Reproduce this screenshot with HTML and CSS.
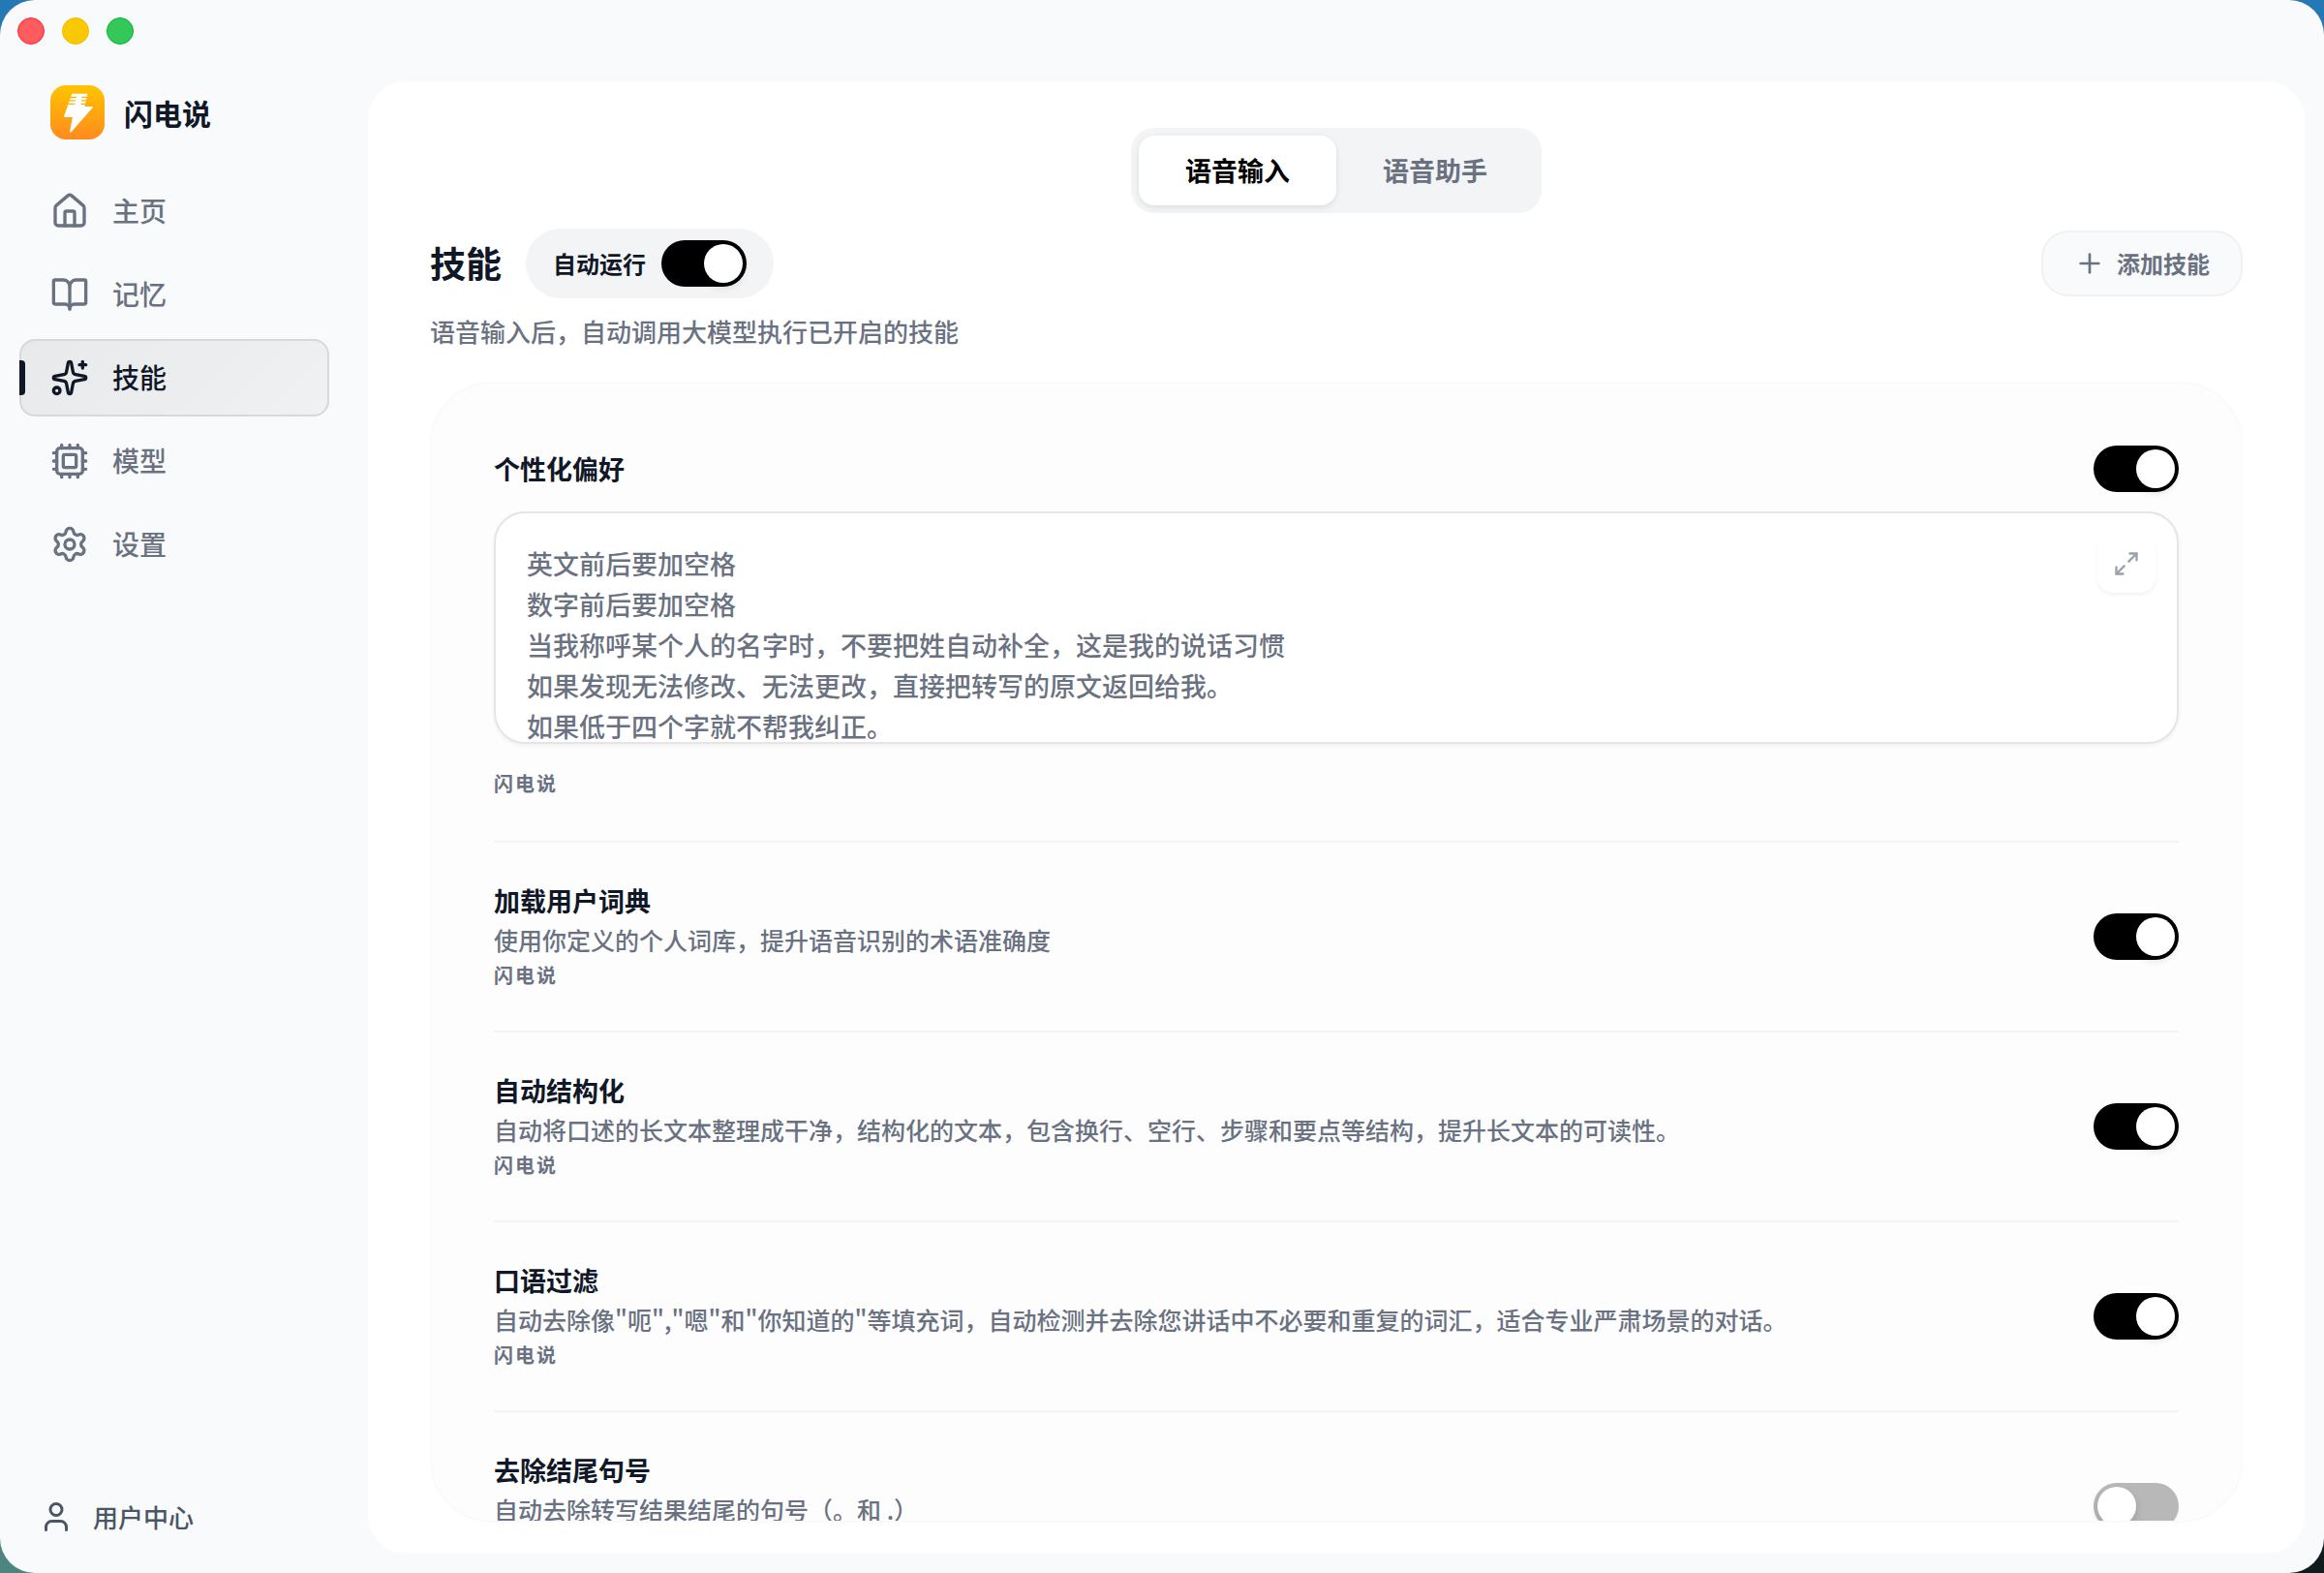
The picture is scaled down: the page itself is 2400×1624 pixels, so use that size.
FILE: index.html
```html
<!DOCTYPE html>
<html lang="zh-CN">
<head>
<meta charset="utf-8">
<meta name="viewport" content="width=device-width, initial-scale=1">
<title>闪电说</title>
<link rel="stylesheet" href="styles.css">
</head>
<body>
<div class="window">
  <aside class="sidebar">
    <div class="traffic">
      <button type="button" class="light light-close" aria-label="关闭"></button>
      <button type="button" class="light light-min" aria-label="最小化"></button>
      <button type="button" class="light light-zoom" aria-label="缩放"></button>
    </div>
    <div class="brand">
      <svg class="logo" viewBox="0 0 56 56" aria-hidden="true">
        <defs>
          <linearGradient id="logo-fill" x1="0" y1="0" x2="0" y2="1">
            <stop offset="0" stop-color="#ffc400"/>
            <stop offset="1" stop-color="#ff8a1f"/>
          </linearGradient>
        </defs>
        <rect width="56" height="56" rx="16" fill="url(#logo-fill)"/>
        <path d="M22.800 9.500 H37.500 L34.500 22.700 H43 L20.800 48 L23.800 32.300 H14.800 Z" fill="#fff" stroke="#fff" stroke-width="1.500" stroke-linejoin="round"/>
        <path d="M20 12.400 H27 M32.500 12.400 H38 M18 15.900 H26 M32 15.900 H37 M17 19.400 H25.500 M31.500 19.400 H36.500" fill="none" stroke="#ffb507" stroke-width="1.300"/>
      </svg>
      <span class="brand-name">闪电说</span>
    </div>
    <nav class="nav">
      <a class="nav-item" href="#home">
        <svg class="icon" viewBox="0 0 24 24" aria-hidden="true"><path d="M15 21v-8a1 1 0 0 0-1-1h-4a1 1 0 0 0-1 1v8"/><path d="M3 10a2 2 0 0 1 .709-1.528l7-5.999a2 2 0 0 1 2.582 0l7 5.999A2 2 0 0 1 21 10v9a2 2 0 0 1-2 2H5a2 2 0 0 1-2-2z"/></svg>
        <span class="nav-label">主页</span>
      </a>
      <a class="nav-item" href="#memory">
        <svg class="icon" viewBox="0 0 24 24" aria-hidden="true"><path d="M12 7v14"/><path d="M3 18a1 1 0 0 1-1-1V4a1 1 0 0 1 1-1h5a4 4 0 0 1 4 4 4 4 0 0 1 4-4h5a1 1 0 0 1 1 1v13a1 1 0 0 1-1 1h-6a3 3 0 0 0-3 3 3 3 0 0 0-3-3z"/></svg>
        <span class="nav-label">记忆</span>
      </a>
      <a class="nav-item is-active" href="#skills" aria-current="page">
        <svg class="icon" viewBox="0 0 24 24" aria-hidden="true"><path d="M11.017 2.814a1 1 0 0 1 1.966 0l1.051 5.558a2 2 0 0 0 1.594 1.594l5.558 1.051a1 1 0 0 1 0 1.966l-5.558 1.051a2 2 0 0 0-1.594 1.594l-1.051 5.558a1 1 0 0 1-1.966 0l-1.051-5.558a2 2 0 0 0-1.594-1.594l-5.558-1.051a1 1 0 0 1 0-1.966l5.558-1.051a2 2 0 0 0 1.594-1.594z"/><path d="M20 2v4"/><path d="M22 4h-4"/><circle cx="4" cy="20" r="2"/></svg>
        <span class="nav-label">技能</span>
      </a>
      <a class="nav-item" href="#models">
        <svg class="icon" viewBox="0 0 24 24" aria-hidden="true"><path d="M12 20v2M12 2v2M17 20v2M17 2v2M2 12h2M2 17h2M2 7h2M20 12h2M20 17h2M20 7h2M7 20v2M7 2v2"/><rect x="4" y="4" width="16" height="16" rx="2"/><rect x="8" y="8" width="8" height="8" rx="1"/></svg>
        <span class="nav-label">模型</span>
      </a>
      <a class="nav-item" href="#settings">
        <svg class="icon" viewBox="0 0 24 24" aria-hidden="true"><path d="M9.671 4.136a2.34 2.34 0 0 1 4.659 0 2.34 2.34 0 0 0 3.319 1.915 2.34 2.34 0 0 1 2.33 4.033 2.34 2.34 0 0 0 0 3.831 2.34 2.34 0 0 1-2.33 4.033 2.34 2.34 0 0 0-3.319 1.915 2.34 2.34 0 0 1-4.659 0 2.34 2.34 0 0 0-3.32-1.915 2.34 2.34 0 0 1-2.33-4.033 2.34 2.34 0 0 0 0-3.831A2.34 2.34 0 0 1 6.35 6.051a2.34 2.34 0 0 0 3.319-1.915"/><circle cx="12" cy="12" r="3"/></svg>
        <span class="nav-label">设置</span>
      </a>
    </nav>
    <a class="account" href="#account">
      <svg class="icon icon-user" viewBox="0 0 24 24" aria-hidden="true"><path d="M19 21v-2a4 4 0 0 0-4-4H9a4 4 0 0 0-4 4v2"/><circle cx="12" cy="7" r="4"/></svg>
      <span class="nav-label">用户中心</span>
    </a>
  </aside>

  <main class="main">
    <div class="tabs" role="tablist">
      <button type="button" class="tab is-selected" role="tab" aria-selected="true">语音输入</button>
      <button type="button" class="tab" role="tab" aria-selected="false">语音助手</button>
    </div>

    <header class="head">
      <div class="head-left">
        <h1 class="title">技能</h1>
        <label class="autorun">
          <span class="autorun-label">自动运行</span>
          <input type="checkbox" class="switch" role="switch" checked>
        </label>
      </div>
      <button type="button" class="add">
        <svg class="icon icon-plus" viewBox="0 0 24 24" aria-hidden="true"><path d="M5 12h14"/><path d="M12 5v14"/></svg>
        <span class="add-label">添加技能</span>
      </button>
    </header>
    <p class="subtitle">语音输入后，自动调用大模型执行已开启的技能</p>

    <section class="list">
      <article class="skill skill-pref">
        <div class="pref-head">
          <h2 class="skill-name" id="pref-name">个性化偏好</h2>
          <input type="checkbox" class="switch" role="switch" aria-labelledby="pref-name" checked>
        </div>
        <div class="editor">
          <textarea class="prompt" aria-labelledby="pref-name" spellcheck="false">英文前后要加空格
数字前后要加空格
当我称呼某个人的名字时，不要把姓自动补全，这是我的说话习惯
如果发现无法修改、无法更改，直接把转写的原文返回给我。
如果低于四个字就不帮我纠正。</textarea>
          <button type="button" class="expand" aria-label="展开">
            <svg class="icon icon-expand" viewBox="0 0 24 24" aria-hidden="true"><path d="M15 3h6v6"/><path d="m21 3-7 7"/><path d="m3 21 7-7"/><path d="M9 21H3v-6"/></svg>
          </button>
        </div>
        <p class="skill-source">闪电说</p>
      </article>
      <article class="skill">
        <div class="skill-text">
          <h2 class="skill-name" id="dict-name">加载用户词典</h2>
          <p class="skill-desc">使用你定义的个人词库，提升语音识别的术语准确度</p>
          <p class="skill-source">闪电说</p>
        </div>
        <input type="checkbox" class="switch" role="switch" aria-labelledby="dict-name" checked>
      </article>
      <article class="skill">
        <div class="skill-text">
          <h2 class="skill-name" id="struct-name">自动结构化</h2>
          <p class="skill-desc">自动将口述的长文本整理成干净，结构化的文本，包含换行、空行、步骤和要点等结构，提升长文本的可读性。</p>
          <p class="skill-source">闪电说</p>
        </div>
        <input type="checkbox" class="switch" role="switch" aria-labelledby="struct-name" checked>
      </article>
      <article class="skill">
        <div class="skill-text">
          <h2 class="skill-name" id="filter-name">口语过滤</h2>
          <p class="skill-desc">自动去除像"呃","嗯"和"你知道的"等填充词，自动检测并去除您讲话中不必要和重复的词汇，适合专业严肃场景的对话。</p>
          <p class="skill-source">闪电说</p>
        </div>
        <input type="checkbox" class="switch" role="switch" aria-labelledby="filter-name" checked>
      </article>
      <article class="skill">
        <div class="skill-text">
          <h2 class="skill-name" id="period-name">去除结尾句号</h2>
          <p class="skill-desc">自动去除转写结果结尾的句号（。和 .）</p>
          <p class="skill-source">闪电说</p>
        </div>
        <input type="checkbox" class="switch" role="switch" aria-labelledby="period-name">
      </article>
    </section>
  </main>
</div>
</body>
</html>
```
FILE: styles.css
```css
*,
*::before,
*::after {
  box-sizing: border-box;
}

html,
body {
  height: 100%;
  margin: 0;
}

body {
  overflow: hidden;
  font-family: "Noto Sans CJK SC", "Noto Sans", sans-serif;
  font-weight: 500;
  color: #101828;
  background: conic-gradient(#2478b4 0 25%, #0f1b1c 0 50%, #4c8580 0 75%, #2478b4 0);
}

h1,
h2,
p {
  margin: 0;
}

button,
textarea,
input {
  margin: 0;
  font: inherit;
  color: inherit;
}

a {
  color: inherit;
  text-decoration: none;
}

.icon {
  flex: none;
  width: 40px;
  height: 40px;
  fill: none;
  stroke: currentColor;
  stroke-width: 2;
  stroke-linecap: round;
  stroke-linejoin: round;
}

.window {
  display: flex;
  height: 100%;
  padding: 0 20px 20px 0;
  background: #f9fafc;
  border-radius: 36px;
}

/* Sidebar */

.sidebar {
  display: flex;
  flex: none;
  flex-direction: column;
  width: 380px;
  padding: 18px 40px 0 20px;
}

.traffic {
  display: flex;
  gap: 18px;
  margin-left: -2px;
}

.light {
  width: 28px;
  height: 28px;
  padding: 0;
  border: 1px solid;
  border-radius: 50%;
}

.light-close {
  background: #ff5c60;
  border-color: #fb2c36;
}

.light-min {
  background: #fac800;
  border-color: #f0bd00;
}

.light-zoom {
  background: #34c759;
  border-color: #00b827;
}

.brand {
  display: flex;
  gap: 20px;
  align-items: center;
  height: 56px;
  margin: 42px 0 34px;
  padding-left: 32px;
}

.logo {
  width: 56px;
  height: 56px;
}

.brand-name {
  font-size: 30px;
  font-weight: 700;
  line-height: 40px;
}

.nav {
  display: flex;
  flex-direction: column;
  gap: 6px;
}

.nav-item {
  position: relative;
  display: flex;
  gap: 24px;
  align-items: center;
  height: 80px;
  padding: 0 30px;
  font-size: 28px;
  color: #6a7282;
  border: 2px solid transparent;
  border-radius: 16px;
}

.nav-label,
.autorun-label,
.add-label {
  padding-bottom: 2px;
}

.nav-item.is-active {
  color: #101828;
  background: linear-gradient(135deg, #e8e9ea, #f0f1f3) border-box;
  border-color: #d6d8da;
}

.nav-item.is-active::before {
  position: absolute;
  top: 20px;
  left: -2px;
  width: 6px;
  height: 36px;
  content: "";
  background: #101828;
  border-radius: 0 4px 4px 0;
}

.account {
  display: flex;
  gap: 20px;
  align-items: center;
  height: 56px;
  margin-top: auto;
  margin-bottom: 10px;
  padding-left: 20px;
  font-size: 26px;
  color: #4a5565;
}

.icon-user {
  width: 36px;
  height: 36px;
}

/* Main panel */

.main {
  display: flex;
  flex: 1;
  flex-direction: column;
  min-width: 0;
  margin-top: 84px;
  padding: 48px 64px 32px;
  background: #fff;
  border-radius: 40px;
}

.tabs {
  display: flex;
  align-self: center;
  padding: 8px;
  background: #f3f4f6;
  border-radius: 24px;
}

.tab {
  height: 72px;
  padding: 0 48px 2px;
  font-size: 27px;
  font-weight: 700;
  color: #6a7282;
  background: none;
  border: 0;
  border-radius: 16px;
}

.tab.is-selected {
  color: #000;
  background: #fff;
  box-shadow: 0 2px 6px rgb(0 0 0 / 10%);
}

.head {
  display: flex;
  align-items: center;
  justify-content: space-between;
  margin-top: 16px;
}

.head-left {
  display: flex;
  gap: 25px;
  align-items: center;
}

.title {
  padding-bottom: 2px;
  font-size: 37px;
  font-weight: 700;
  line-height: 48px;
}

.autorun {
  display: flex;
  gap: 16px;
  align-items: center;
  height: 72px;
  padding: 0 28px;
  font-size: 24px;
  font-weight: 700;
  background: #f3f4f6;
  border-radius: 36px;
}

.switch {
  flex: none;
  width: 88px;
  height: 48px;
  padding: 4px;
  appearance: none;
  background: #b8b8b8;
  border-radius: 24px;
}

.switch::before {
  display: block;
  width: 40px;
  height: 40px;
  content: "";
  background: #fff;
  border-radius: 50%;
  box-shadow: 0 4px 8px rgb(0 0 0 / 15%);
}

.switch:checked {
  background: #000;
}

.switch:checked::before {
  margin-left: auto;
}

.add {
  display: flex;
  gap: 12px;
  align-items: center;
  height: 68px;
  padding: 0 32px;
  font-size: 24px;
  font-weight: 700;
  color: #6a7282;
  background: #f9fafb;
  border: 2px solid #eff1f3;
  border-radius: 28px;
}

.icon-plus {
  width: 32px;
  height: 32px;
}

.subtitle {
  margin-top: 14px;
  font-size: 26px;
  line-height: 40px;
  color: #6a7282;
}

/* Skill list */

.list {
  flex: 1;
  min-height: 0;
  margin-top: 32px;
  padding: 64px;
  overflow: hidden;
  background: #fdfdfd;
  border: 2px solid #fafafa;
  border-radius: 64px;
}

.skill {
  display: flex;
  align-items: center;
  justify-content: space-between;
  padding: 38px 0;
}

.skill + .skill {
  border-top: 2px solid #f4f4f5;
}

.skill-pref {
  display: block;
  padding: 0 0 40px;
}

.pref-head {
  display: flex;
  align-items: center;
  justify-content: space-between;
}

.skill-name {
  font-size: 27px;
  font-weight: 700;
  line-height: 44px;
}

.skill-desc {
  font-size: 25px;
  line-height: 36px;
  color: #6a7282;
}

.skill-source {
  font-size: 20px;
  font-weight: 700;
  line-height: 38px;
  color: #6a7282;
  letter-spacing: 2px;
}

.editor {
  position: relative;
  margin: 20px 0 22px;
}

.prompt {
  display: block;
  width: 100%;
  height: 240px;
  padding: 31px 32px;
  overflow: hidden;
  font-size: 27px;
  line-height: 42px;
  color: #6a7282;
  resize: none;
  background: #fff;
  border: 2px solid #e5e5e5;
  border-radius: 32px;
  box-shadow: 0 2px 4px rgb(0 0 0 / 5%);
}

.expand {
  position: absolute;
  top: 24px;
  right: 24px;
  display: grid;
  place-items: center;
  width: 60px;
  height: 60px;
  padding: 0;
  color: #99a1af;
  background: #fff;
  border: 0;
  border-radius: 16px;
  box-shadow: 0 2px 4px rgb(0 0 0 / 6%);
}

.icon-expand {
  width: 28px;
  height: 28px;
}
```
